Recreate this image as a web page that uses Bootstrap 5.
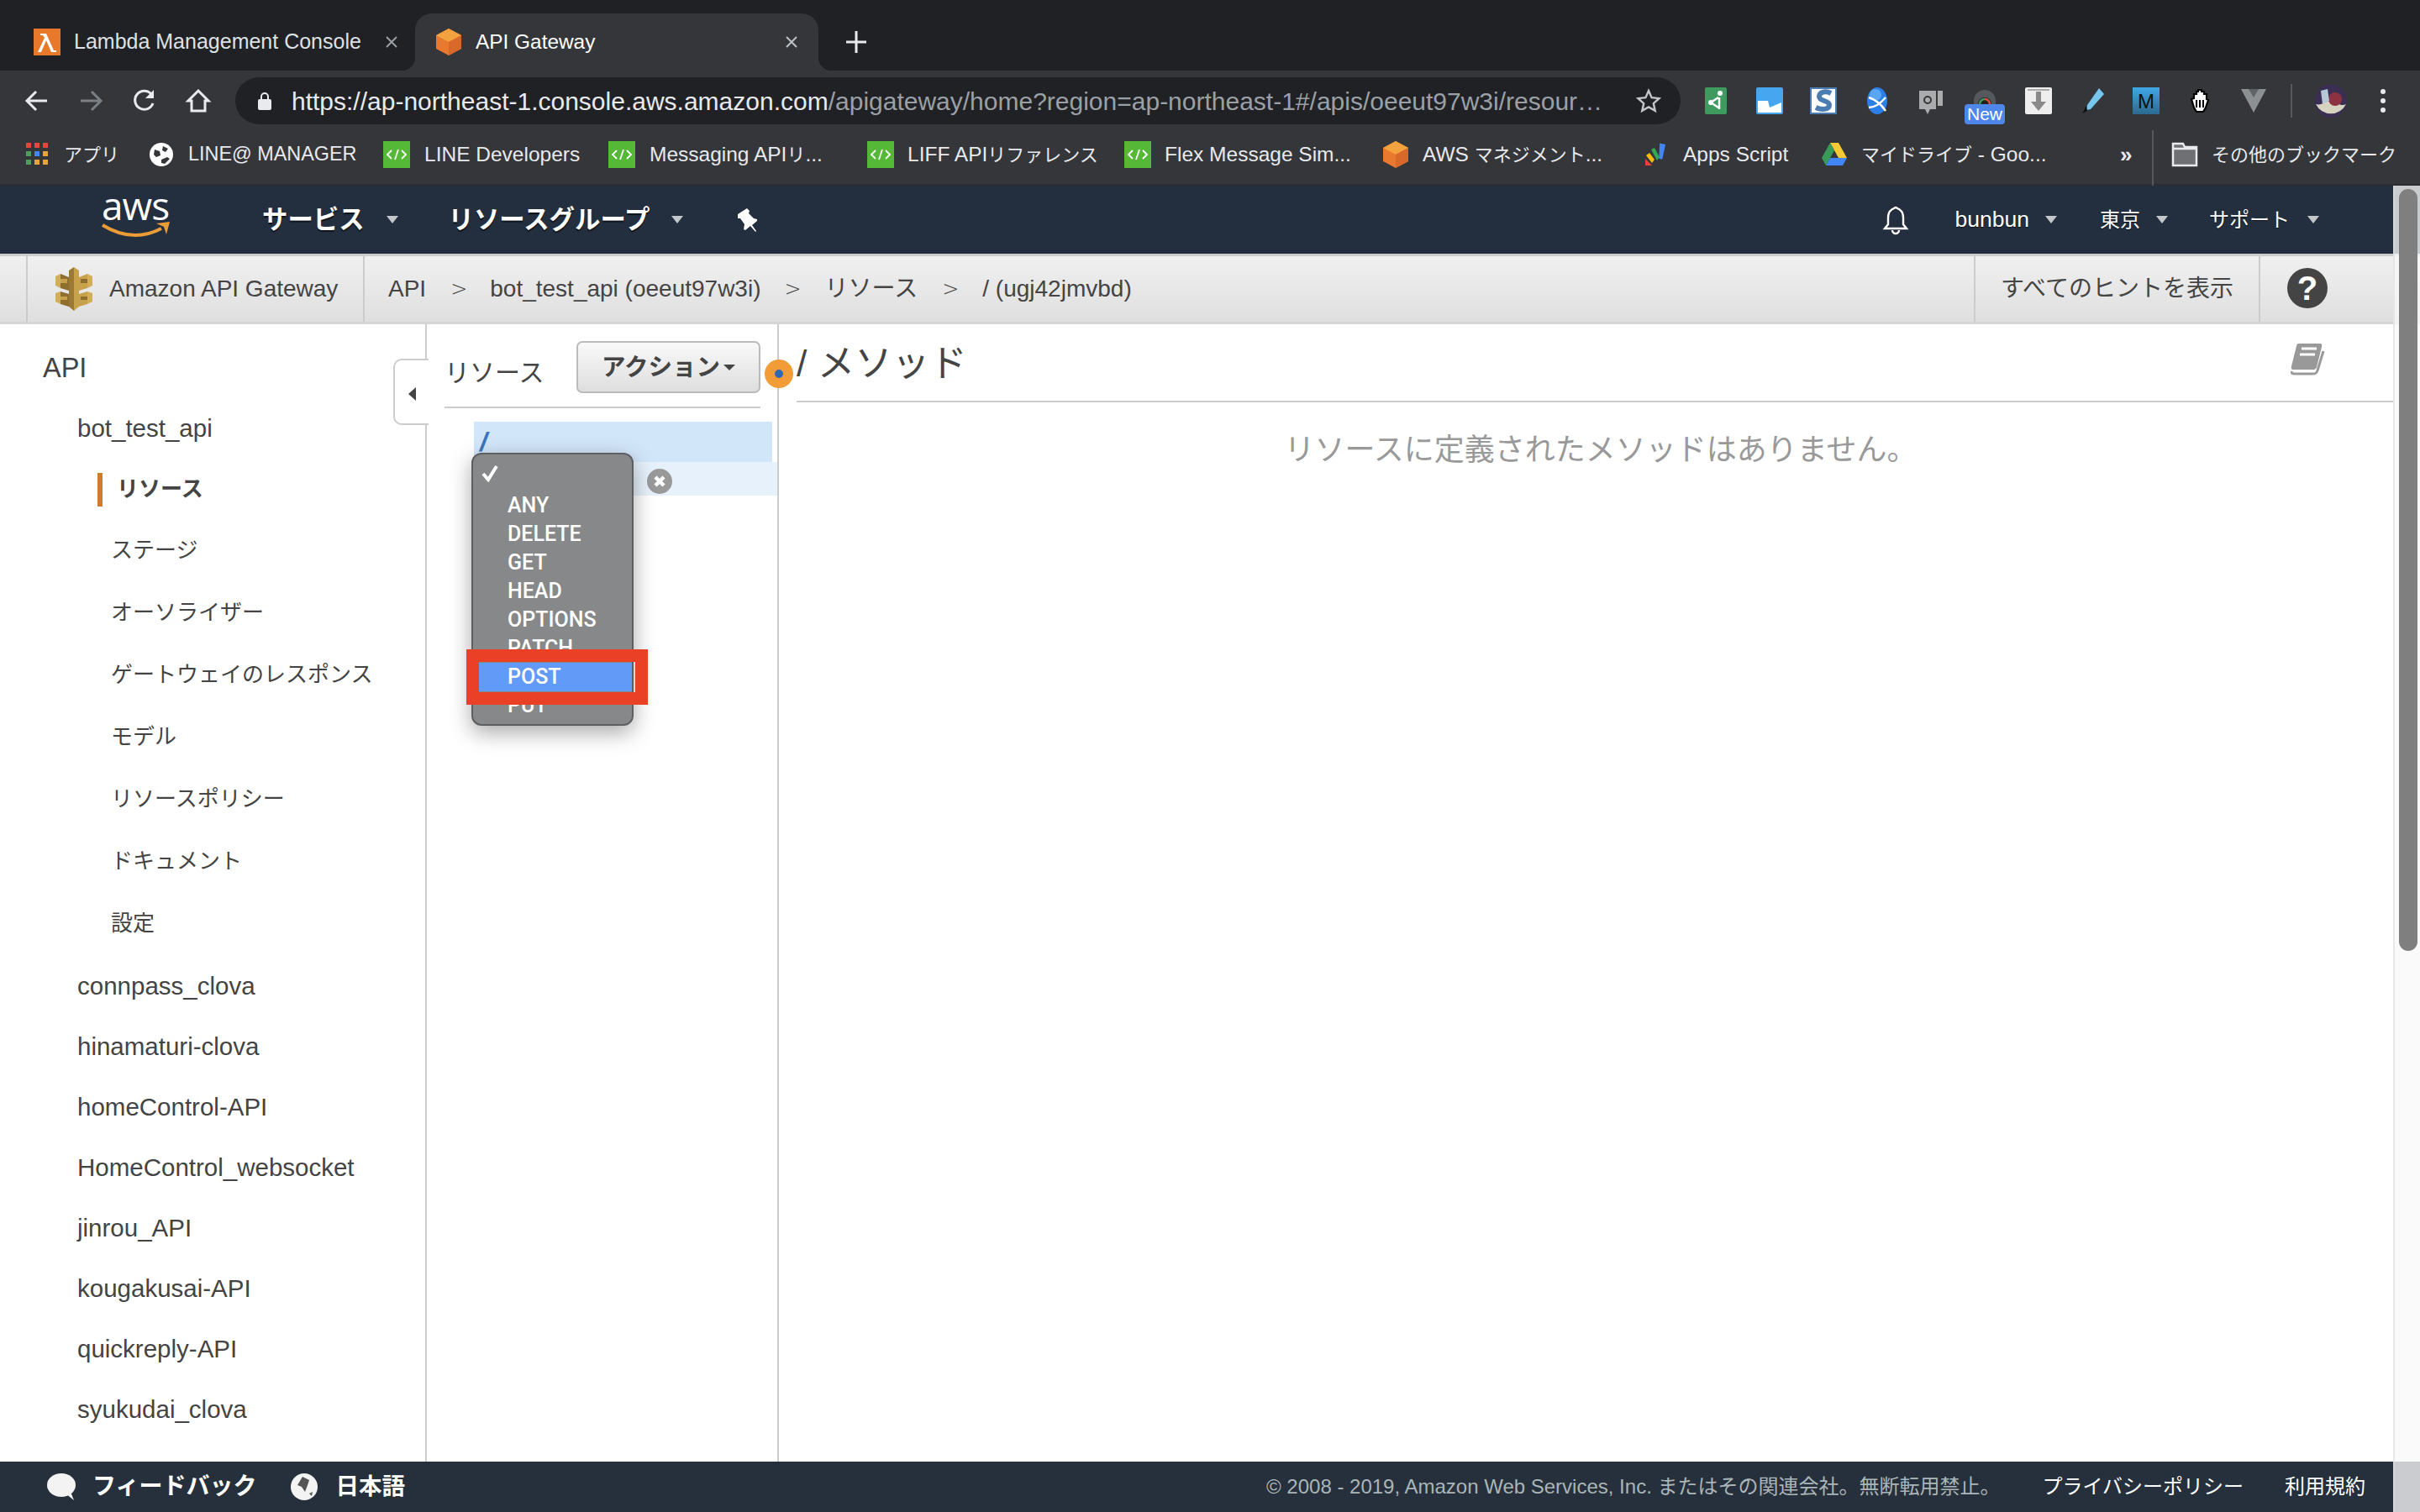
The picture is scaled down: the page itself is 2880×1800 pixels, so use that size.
<!DOCTYPE html>
<html lang="ja">
<head>
<meta charset="utf-8">
<title>API Gateway</title>
<link href="https://cdn.jsdelivr.net/npm/bootstrap@5.3.0/dist/css/bootstrap.min.css" rel="stylesheet">
<style>
html,body{margin:0;width:2880px;height:1800px;overflow:hidden;background:#fff}
body{font-family:"Liberation Sans","Noto Sans CJK JP",sans-serif;color:#444;display:flex;flex-direction:column}
svg{display:block;flex:none}
/* browser chrome */
.tabstrip{height:84px;background:#202124;padding-left:0;flex:none}
.tabx{height:68px;margin-top:16px;color:#dee1e5;font-size:25px;position:relative}
.tabx-a{width:494px;padding:0 20px 0 40px}
.tabx-b{width:480px;padding:0 24px;background:#35363a;border-radius:20px 20px 0 0;color:#fff;font-size:24.4px}
.tabx-b::before,.tabx-b::after{content:"";position:absolute;bottom:0;width:16px;height:16px}
.tabx-b::before{left:-16px;background:radial-gradient(circle at 0 0,transparent 16px,#35363a 16.5px)}
.tabx-b::after{right:-16px;background:radial-gradient(circle at 100% 0,transparent 16px,#35363a 16.5px)}
.tabname{margin-left:16px;flex:1;white-space:nowrap}
.plusmark{margin-left:32px;margin-top:16px}
.toolbar{height:72px;background:#35363a;flex:none;padding:8px 0 8px 28px}
.tool-nav{width:32px;margin-right:32px}
.urlpill{width:1720px;height:56px;margin-left:-4px;background:#202124;border-radius:28px;padding:0 23px 0 26px;flex:none;color:#9aa0a6;font-size:30px;white-space:nowrap}
.urlhost{color:#e8eaed}
.urltext{margin-left:23px;flex:1;overflow:hidden}
.exts{margin-left:26px;gap:32px;position:relative}
.exts-end{margin-left:28px;gap:26px}
.sepbar{width:2px;height:40px;background:#55585c}
.newtag{position:absolute;left:312px;top:20px;width:48px;height:24px;background:#4f86ea;color:#fff;font-size:21px;line-height:24px;text-align:center;border-radius:4px}
.bookmarks{height:65px;background:#35363a;flex:none;padding:0 0 7px 31px;color:#e8eaed;font-size:24.5px;white-space:nowrap;border-bottom:2px solid #2b2c30}
.cj{font-size:22px}
.capsname{font-size:23.4px}
.bmk{gap:17px;flex:none}
.bmk:nth-child(1){width:147px;gap:19px}
.bmk:nth-child(2){width:278px;gap:18px}
.bmk:nth-child(3){width:268px;gap:17px}
.bmk:nth-child(4){width:308px;gap:17px}
.bmk:nth-child(5){width:306px;gap:16px}
.bmk:nth-child(6){width:307px;gap:16px}
.bmk:nth-child(7){width:311px;gap:16px}
.bmk:nth-child(8){width:212px;gap:17px}
.bmk:nth-child(9){width:346px;gap:17px}
.morebm{width:30px;font-size:26px;font-weight:700;margin-right:8px;text-align:left}
.bmsep{width:2px;height:66px;background:#55585c;margin-right:21px;margin-top:7px}
.bmkend{padding-right:28px;gap:16px}
/* aws */
.appzone{flex:1;position:relative;display:flex;flex-direction:column;min-height:0}
.awsbar{height:81px;background:#232f3e;color:#fff;flex:none;padding:0 0 0 121px;white-space:nowrap}
.awslogo{width:80px;position:relative;height:60px;margin-right:111px}
.awsword{font-family:"Open Sans",sans-serif;font-size:46px;line-height:40px;display:block;letter-spacing:-1px;margin-top:-8px}
.awssmile{position:absolute;left:0;top:30px}
.topmenu{font-size:30.4px;font-weight:700;text-shadow:0 2px 1px rgba(0,0,0,.6)}
.caretv{width:0;height:0;border:7px solid transparent;border-top:9px solid #c4c7ca;border-bottom:0;display:inline-block}
.m1{margin-left:26px;margin-right:60px}
.m2{margin-left:26px;margin-right:64px}
.usernav{margin-left:auto;margin-right:120px;font-size:26.5px;text-shadow:0 1px 1px rgba(0,0,0,.6)}
.usr{margin-left:54px;margin-right:19px}
.loc{margin-left:51px;margin-right:19px;font-size:24px}
.sup{margin-left:49px;margin-right:21px;font-size:24px}
.crumbs{height:84px;background:linear-gradient(#f0f0f0,#dfdfdf);border-top:3px solid #ccc;border-bottom:3px solid #d5d5d5;flex:none;padding-left:31px;font-size:28px;color:#444;white-space:nowrap;box-sizing:border-box}
.crumb-brand{width:403px;height:100%;border-left:2px solid #ccc;border-right:2px solid #ccc;padding-left:33px;gap:20px;flex:none}
.crumb-path{padding-left:28px;gap:0}
.gt{font-family:"DejaVu Sans",sans-serif;font-weight:300;font-size:24px;color:#444}
.pc1{margin-right:29px}.pc2{margin:0 28px 0 27px}.pc3{margin:0 29px 0 28px}.pc4{margin:0 29px 0 28px}
.gtrail{margin-left:auto;height:100%;margin-right:190px;border-left:2px solid #ccc;border-right:2px solid #ccc;padding:0 30px;font-size:28px;flex:none;width:341px}
.helpdot{position:absolute;left:2722px;top:98px}
/* main */
.mainrow{flex:1;min-height:0}
.sidebarx{width:508px;border-right:2px solid #ccc;flex:none;padding-top:16px;font-size:29.5px;color:#444;position:relative}
.apihead{height:72px;padding-left:51px;font-size:32.5px}
.lv2{height:72px;padding-left:92px}
.lv3{height:74px;padding-left:132px;font-size:26px}
.lv3t{height:72px;margin-bottom:1px}
.lvend{margin-bottom:2px}
.act{font-weight:700;position:relative;padding-left:139px}
.act::before{content:"";position:absolute;left:116px;top:17px;width:6px;height:40px;background:#d07c2e}
.collapse-tab{position:absolute;left:468px;top:41px;width:42px;height:79px;background:#fff;border:2px solid #ccc;border-right:0;border-radius:10px 0 0 10px}
.collapse-arrow{position:absolute;left:16px;top:32px;width:0;height:0;border:8px solid transparent;border-right:9px solid #444;border-left:0}
.respanel{width:419px;border-right:2px solid #ccc;flex:none;position:relative}
.reshead{margin:20px 20px 0 21px;padding-bottom:16px;border-bottom:2px solid #ccc;height:80px}
.restitle{font-size:30px;margin-top:18px;flex:1;line-height:40px}
.actionbtn{width:219px;height:62px;background:linear-gradient(#f9f9f9,#dedede);border:2px solid #bbb;border-radius:7px;color:#444;font-weight:700;font-size:28.5px;padding:0;display:flex;align-items:center;justify-content:center;gap:4px}
.caretd{width:0;height:0;border:7px solid transparent;border-top:7px solid #444;border-bottom:0;display:inline-block}
.rowroot{height:48px;margin:16px 6px 0 56px;background:#d2e6fa;color:#3a74bd;font-size:32px;font-style:italic;font-weight:700;padding-left:7px;line-height:48px}
.rowchild{height:40px;margin-left:56px;background:#e6f1fb;position:relative}
.rmdot{position:absolute;left:206px;top:8px}
.methodlist{position:absolute;left:53px;top:153px;width:193px;height:325px;background:#878889;border:2px solid #5e5f61;border-radius:12px;box-shadow:0 8px 26px rgba(0,0,0,.35);color:#fff;font-family:Roboto,"Liberation Sans",sans-serif;font-weight:500;font-size:25px;padding:0;margin:0;overflow:hidden;min-width:0;display:block}
.mcheck{position:absolute;left:10px;top:11px}
.mitems{margin:44px 0 0;padding:0;list-style:none}
.mitems li{height:34px;line-height:34px;padding-left:41px}
.mpost{background:#619bf7}
.redbox{position:absolute;left:47px;top:387px;width:216px;height:66px;border:15px solid #ea4025;pointer-events:none;z-index:1100}
.dotmark{position:absolute;left:402px;top:42px;width:34px;height:34px;background:#f29c38;border-radius:50%;z-index:3}
.dotmark::after{content:"";position:absolute;left:12px;top:12px;width:10px;height:10px;background:#2f67b8;border-radius:50%}
.methods{flex:1;padding:0 32px 0 21px;position:relative}
.methhead{height:93px;border-bottom:2px solid #ccc;font-size:44.5px;color:#444;line-height:94px}
.bookic{position:absolute;right:112px;top:23px}
.emptymsg{color:#999;font-size:36px;text-align:center;margin-top:35px;line-height:44px;padding-left:14px}
/* footer */
.footerx{height:60px;background:#26303c;color:#fff;flex:none;font-size:28px;white-space:nowrap;padding-left:56px}
.fb{font-weight:700;margin-left:20px}
.fl{font-weight:700;margin-left:21px;font-size:27.5px}
.globe{margin-left:41px}
.fright{margin-left:auto;margin-right:65px;font-size:24px}
.copyx{color:#aab5b8}
.fp1{margin-left:50px}
.fp2{margin-left:49px}
.scrolltrack{position:absolute;right:0;top:0;bottom:0;width:32px;background:rgba(248,248,248,.78);border-left:2px solid rgba(220,220,220,.6);z-index:1200}
.scrollthumb{position:absolute;left:5px;top:4px;width:22px;height:907px;background:#7f7f7f;border-radius:11px}
</style>
</head>
<body>
<div class="tabstrip d-flex">
  <div class="tabx tabx-a d-flex align-items-center">
    <svg width="32" height="32" viewBox="0 0 32 32"><rect width="32" height="32" fill="#e8792b"/><path d="M8 6h7l9 20h3v2h-6L15 14 9 28H5l8-17-2-3H8z" fill="#fff"/></svg>
    <span class="tabname">Lambda Management Console</span>
    <svg width="16" height="16" viewBox="0 0 16 16"><path d="M2 2l12 12M14 2L2 14" stroke="#9aa0a6" stroke-width="2"/></svg>
  </div>
  <div class="tabx tabx-b d-flex align-items-center">
    <svg width="32" height="32" viewBox="0 0 32 32"><path d="M16 0l15 8v16l-15 8-15-8V8z" fill="#e8792f"/><path d="M16 0l15 8-15 8L1 8z" fill="#f3a23f"/><path d="M16 16l15-8v16l-15 8z" fill="#d9692a"/></svg>
    <span class="tabname">API Gateway</span>
    <svg width="16" height="16" viewBox="0 0 16 16"><path d="M2 2l12 12M14 2L2 14" stroke="#bdc1c6" stroke-width="2"/></svg>
  </div>
  <svg class="plusmark" width="26" height="68" viewBox="0 0 26 68"><path d="M13 21v26M1 34h24" stroke="#e8eaed" stroke-width="3"/></svg>
</div>

<div class="toolbar d-flex align-items-center">
  <svg class="tool-nav" width="32" height="32" viewBox="0 0 32 32"><path d="M28 16H5M15 5L4 16l11 11" fill="none" stroke="#e8eaed" stroke-width="3"/></svg>
  <svg class="tool-nav" width="32" height="32" viewBox="0 0 32 32"><path d="M4 16h23M17 5l11 11-11 11" fill="none" stroke="#7b7e82" stroke-width="3"/></svg>
  <svg class="tool-nav" width="32" height="32" viewBox="0 0 32 32"><path d="M26 19a11 11 0 1 1-2-11" fill="none" stroke="#e8eaed" stroke-width="3"/><path d="M27 3v10H17z" fill="#e8eaed"/></svg>
  <svg class="tool-nav" width="32" height="32" viewBox="0 0 32 32"><path d="M16 4L4 16h4v12h16V16h4z" fill="none" stroke="#e8eaed" stroke-width="3"/></svg>
  <div class="urlpill d-flex align-items-center">
    <svg width="18" height="24" viewBox="0 0 18 24"><path d="M5 10V7a4 4 0 0 1 8 0v3" fill="none" stroke="#e8eaed" stroke-width="2"/><rect x="1" y="10" width="16" height="13" rx="2" fill="#e8eaed"/></svg>
    <span class="urltext"><span class="urlhost">https://ap-northeast-1.console.aws.amazon.com</span>/apigateway/home?region=ap-northeast-1#/apis/oeeut97w3i/resour…</span>
    <svg width="30" height="30" viewBox="0 0 30 30"><path d="M15 3l3.6 8.2 8.9.9-6.7 6 1.900 8.800L15 22.400l-7.700 4.500 1.900-8.800-6.700-6 8.900-.9z" fill="none" stroke="#c4c7ca" stroke-width="2.400"/></svg>
  </div>
  <div class="exts d-flex align-items-center">
    <svg width="32" height="32" viewBox="0 0 32 32"><rect x="3" width="26" height="32" rx="2" fill="#3e9a5e"/><circle cx="21" cy="7" r="3" fill="#fff"/><path d="M20 12v14M10 18l9-6M10 18l9 6" stroke="#fff" stroke-width="2.500"/><circle cx="10" cy="18" r="3" fill="#fff"/></svg>
    <svg width="32" height="32" viewBox="0 0 32 32"><rect width="32" height="32" rx="2" fill="#46a6ef"/><path d="M2 16h12l2 8 14-6v12H2z" fill="#fff"/></svg>
    <svg width="32" height="32" viewBox="0 0 32 32"><rect width="32" height="32" fill="#fff"/><rect x="1" y="1" width="30" height="30" fill="none" stroke="#4b7db3" stroke-width="2"/><path d="M25 7c-6-3-14-2-14 4 0 6 12 4 12 10 0 6-10 6-16 3" fill="none" stroke="#4b7db3" stroke-width="6"/></svg>
    <svg width="32" height="32" viewBox="0 0 32 32"><ellipse cx="16" cy="16" rx="12" ry="16" fill="#2c7fe8"/><ellipse cx="14" cy="9" rx="7" ry="7" fill="#5aa6f2"/><path d="M6 12q12 4 20 16M26 12Q16 24 6 24" stroke="#fff" stroke-width="2.400" fill="none"/></svg>
    <svg width="32" height="32" viewBox="0 0 32 32"><path d="M2 4h20v22h-7l-3 6-3-6H2z" fill="#a9abad"/><path d="M24 4h6v18h-6z" fill="#a9abad"/><circle cx="12" cy="15" r="4" fill="none" stroke="#35363a" stroke-width="2"/></svg>
    <svg width="32" height="32" viewBox="0 0 32 32"><path d="M3 16a13 13 0 0 1 26 0v4H3z" fill="#55585c"/><path d="M8 20a8 8 0 0 1 16 0z" fill="#222"/><path d="M10 20a6 6 0 0 1 6-6" stroke="#3e9a5e" stroke-width="2.500" fill="none"/><path d="M16 14a6 6 0 0 1 6 6" stroke="#e0503c" stroke-width="2.500" fill="none"/></svg>
    <svg width="32" height="32" viewBox="0 0 32 32"><rect width="32" height="32" rx="2" fill="#eee"/><path d="M13 5h6v12h6l-9 11-9-11h6z" fill="#8a8a8a"/><path d="M3 3h26" stroke="#aaa" stroke-width="2"/></svg>
    <svg width="32" height="32" viewBox="0 0 32 32"><path d="M24 1l6 7-16 18-5 1 1-6z" fill="#77c6ee"/><path d="M9 22l-5 9 6-3z" fill="#111"/></svg>
    <svg width="32" height="32" viewBox="0 0 32 32"><defs><linearGradient id="mg" x1="0" y1="0" x2="0" y2="1"><stop offset="0" stop-color="#3fa7e6"/><stop offset="1" stop-color="#2b6a90"/></linearGradient></defs><rect width="32" height="32" fill="url(#mg)"/><text x="16" y="25" text-anchor="middle" font-family="Liberation Sans" font-size="24" fill="#111">M</text></svg>
    <svg width="32" height="32" viewBox="0 0 32 32"><path d="M6 14l3-1V8h3V5h2V3h4v2h3v3h3v6l2 1-3 9-3 5H12l-3-5z" fill="#fff" stroke="#000" stroke-width="2.200"/><path d="M12 15v9M16 15v9M20 15v9" stroke="#000" stroke-width="2"/></svg>
    <svg width="32" height="32" viewBox="0 0 32 32"><path d="M1 2h30L16 30z" fill="#8d9093"/><path d="M10 2h12l-6 10z" fill="#5f6266"/></svg>
    <span class="newtag">New</span>
  </div>
  <div class="exts-end d-flex align-items-center">
    <span class="sepbar"></span>
    <svg width="40" height="40" viewBox="0 0 40 40"><ellipse cx="20" cy="20" rx="19" ry="20" fill="#3a2f52"/><path d="M2 24a20 20 0 0 0 36 0c-8 4-10-4-18-4s-10 6-18 4z" fill="#d6d3c0"/><circle cx="25" cy="18" r="8" fill="#8c3240"/><path d="M8 8l8-2 2 14-8 4z" fill="#b6c8d8"/></svg>
    <svg width="32" height="32" viewBox="0 0 32 32"><circle cx="16" cy="5" r="3" fill="#e8eaed"/><circle cx="16" cy="16" r="3" fill="#e8eaed"/><circle cx="16" cy="27" r="3" fill="#e8eaed"/></svg>
  </div>
</div>

<div class="bookmarks d-flex align-items-center">
  <div class="bmk d-flex align-items-center">
    <svg width="26" height="28" viewBox="0 0 26 28"><g fill="#e8453c"><rect width="6" height="6"/><rect x="10" width="6" height="6"/><rect x="20" width="6" height="6"/></g><rect y="10" width="6" height="6" fill="#4ca05c"/><rect x="10" y="10" width="6" height="6" fill="#4285f4"/><rect x="20" y="10" width="6" height="6" fill="#e8a33a"/><rect y="20" width="6" height="6" fill="#4ca05c"/><rect x="10" y="20" width="6" height="6" fill="#e8a33a"/><rect x="20" y="20" width="6" height="6" fill="#e8a33a"/></svg>
    <span class="cj">アプリ</span>
  </div>
  <div class="bmk d-flex align-items-center">
    <svg width="28" height="28" viewBox="0 0 28 28"><circle cx="14" cy="14" r="14" fill="#fff"/><path d="M6 8l6 2 1 5-5 2-3-3zM16 4l6 3-3 4-4-2zM14 20l7-3 3 2-6 6-4-1z" fill="#35363a"/></svg>
    <span class="capsname">LINE@ MANAGER</span>
  </div>
  <div class="bmk d-flex align-items-center">
    <svg width="32" height="32" viewBox="0 0 32 32"><rect width="32" height="32" fill="#55b937"/><path d="M10 11l-5 5 5 5M22 11l5 5-5 5M18 10l-4 12" fill="none" stroke="#fff" stroke-width="1.800"/></svg>
    <span>LINE Developers</span>
  </div>
  <div class="bmk d-flex align-items-center">
    <svg width="32" height="32" viewBox="0 0 32 32"><rect width="32" height="32" fill="#55b937"/><path d="M10 11l-5 5 5 5M22 11l5 5-5 5M18 10l-4 12" fill="none" stroke="#fff" stroke-width="1.800"/></svg>
    <span>Messaging API<span class="cj">リ</span>...</span>
  </div>
  <div class="bmk d-flex align-items-center">
    <svg width="32" height="32" viewBox="0 0 32 32"><rect width="32" height="32" fill="#55b937"/><path d="M10 11l-5 5 5 5M22 11l5 5-5 5M18 10l-4 12" fill="none" stroke="#fff" stroke-width="1.800"/></svg>
    <span>LIFF API<span class="cj">リファレンス</span></span>
  </div>
  <div class="bmk d-flex align-items-center">
    <svg width="32" height="32" viewBox="0 0 32 32"><rect width="32" height="32" fill="#55b937"/><path d="M10 11l-5 5 5 5M22 11l5 5-5 5M18 10l-4 12" fill="none" stroke="#fff" stroke-width="1.800"/></svg>
    <span>Flex Message Sim...</span>
  </div>
  <div class="bmk d-flex align-items-center">
    <svg width="32" height="32" viewBox="0 0 32 32"><path d="M16 0l15 8v16l-15 8-15-8V8z" fill="#e8792f"/><path d="M16 0l15 8-15 8L1 8z" fill="#f3a23f"/><path d="M16 16l15-8v16l-15 8z" fill="#d9692a"/></svg>
    <span>AWS <span class="cj">マネジメント</span>...</span>
  </div>
  <div class="bmk d-flex align-items-center">
    <svg width="30" height="30" viewBox="0 0 30 30"><path d="M2 20l8 8H2z" fill="#ea4335"/><path d="M3 16l7 9 3-4-6-8z" fill="#fbbc05"/><path d="M9 9l7 13 3-4-6-11z" fill="#34a853"/><path d="M17 2l3 18 4 0 0-18z" fill="#4285f4" transform="rotate(12 20 12)"/></svg>
    <span>Apps Script</span>
  </div>
  <div class="bmk d-flex align-items-center">
    <svg width="30" height="28" viewBox="0 0 30 28"><path d="M10 0h10l10 18H20z" fill="#f7c935"/><path d="M10 0L0 18l5 9L15 9z" fill="#3a9b58"/><path d="M5 27h20l5-9H10z" fill="#4285f4"/></svg>
    <span><span class="cj">マイドライブ</span> - Goo...</span>
  </div>
  <div class="ms-auto d-flex align-items-center">
    <span class="morebm">»</span>
    <span class="bmsep"></span>
    <div class="bmkend d-flex align-items-center">
      <svg width="32" height="30" viewBox="0 0 32 30"><path d="M2 2h12l2 4h14v22H2z" fill="#6e7074" stroke="#e8eaed" stroke-width="2.500"/><path d="M2 8h28" stroke="#e8eaed" stroke-width="2.500"/></svg>
      <span class="cj">その他のブックマーク</span>
    </div>
  </div>
</div>

<div class="appzone">
  <nav class="awsbar d-flex align-items-center">
    <div class="awslogo">
      <span class="awsword">aws</span>
      <svg class="awssmile" width="82" height="22" viewBox="0 0 82 22"><path d="M1 6q36 22 70 4" fill="none" stroke="#ec9c36" stroke-width="4"/><path d="M65 4l16-2-4 15-3-9z" fill="#ec9c36"/></svg>
    </div>
    <span class="topmenu">サービス</span><i class="caretv m1"></i>
    <span class="topmenu">リソースグループ</span><i class="caretv m2"></i>
    <svg width="26" height="30" viewBox="0 0 26 30"><path d="M1 8L12 1l3 3-1 3 6 6 4 1v2l-6 5 5 7-1 1-6-7-6 5-2-1 1-6-5-7-3 0z" fill="#fff"/></svg>
    <div class="usernav d-flex align-items-center">
      <svg width="34" height="36" viewBox="0 0 34 36"><path d="M17 3a3 3 0 0 1 2 1c5 2 7 6 7 11v8l4 5H4l4-5v-8c0-5 2-9 7-11a3 3 0 0 1 2-1z" fill="none" stroke="#fff" stroke-width="2.400"/><path d="M13 30a4 4 0 0 0 8 0" fill="none" stroke="#fff" stroke-width="2.400"/></svg>
      <span class="usr">bunbun</span><i class="caretv"></i>
      <span class="loc">東京</span><i class="caretv"></i>
      <span class="sup">サポート</span><i class="caretv"></i>
    </div>
  </nav>

  <div class="crumbs d-flex align-items-center">
    <div class="crumb-brand d-flex align-items-center">
      <svg width="44" height="52" viewBox="0 0 44 52"><path d="M6 8L16 12V28L6 25z" fill="#8f6f2e"/><path d="M0 11l6-3V25l-6-3z" fill="#d3ae58"/><path d="M6 14h8v5H6z" fill="#c8a14c"/><path d="M28 12L38 8V25L28 28z" fill="#c8a14c"/><path d="M38 8l6 3V22l-6 3z" fill="#d3ae58"/><path d="M30 14h8v5h-8z" fill="#8f6f2e"/><path d="M6 29L16 32V47L6 44z" fill="#8f6f2e"/><path d="M0 31l6-2V44l-6-3z" fill="#d3ae58"/><path d="M6 35h8v4H6z" fill="#c8a14c"/><path d="M28 32L38 29V44L28 47z" fill="#c8a14c"/><path d="M38 29l6 2V41l-6 3z" fill="#d3ae58"/><path d="M30 35h8v4h-8z" fill="#8f6f2e"/><path d="M16 4l6-4V52l-6-5z" fill="#9a7a35"/><path d="M22 0l6 4V47l-6 5z" fill="#c8a14c"/></svg>
      <span>Amazon API Gateway</span>
    </div>
    <div class="crumb-path d-flex align-items-center">
      <span class="pc1">API</span><span class="gt">&gt;</span><span class="pc2">bot_test_api (oeeut97w3i)</span><span class="gt">&gt;</span><span class="pc3">リソース</span><span class="gt">&gt;</span><span class="pc4">/ (ugj42jmvbd)</span>
    </div>
    <div class="gtrail d-flex align-items-center"><span>すべてのヒントを表示</span></div>
    <svg class="helpdot" width="48" height="48" viewBox="0 0 48 48"><circle cx="24" cy="24" r="24" fill="#444"/><text x="24" y="38" text-anchor="middle" font-family="Liberation Sans" font-weight="700" font-size="40" fill="#fff">?</text></svg>
  </div>

  <div class="mainrow d-flex">
    <aside class="sidebarx">
      <div class="apihead d-flex align-items-center">API</div>
      <div class="lv2 d-flex align-items-center">bot_test_api</div>
      <div class="lv3 lv3t act d-flex align-items-center">リソース</div>
      <div class="lv3 lv3t d-flex align-items-center">ステージ</div>
      <div class="lv3 d-flex align-items-center">オーソライザー</div>
      <div class="lv3 d-flex align-items-center">ゲートウェイのレスポンス</div>
      <div class="lv3 d-flex align-items-center">モデル</div>
      <div class="lv3 d-flex align-items-center">リソースポリシー</div>
      <div class="lv3 d-flex align-items-center">ドキュメント</div>
      <div class="lv3 lvend d-flex align-items-center">設定</div>
      <div class="lv2 d-flex align-items-center">connpass_clova</div>
      <div class="lv2 d-flex align-items-center">hinamaturi-clova</div>
      <div class="lv2 d-flex align-items-center">homeControl-API</div>
      <div class="lv2 d-flex align-items-center">HomeControl_websocket</div>
      <div class="lv2 d-flex align-items-center">jinrou_API</div>
      <div class="lv2 d-flex align-items-center">kougakusai-API</div>
      <div class="lv2 d-flex align-items-center">quickreply-API</div>
      <div class="lv2 d-flex align-items-center">syukudai_clova</div>
      <div class="collapse-tab"><i class="collapse-arrow"></i></div>
    </aside>
    <section class="respanel">
      <div class="reshead d-flex">
        <span class="restitle">リソース</span>
        <button type="button" class="actionbtn"><span>アクション</span><i class="caretd"></i></button>
      </div>
      <div class="rowroot">/</div>
      <div class="rowchild">
        <svg class="rmdot" width="30" height="30" viewBox="0 0 30 30"><circle cx="15" cy="15" r="15" fill="#999"/><path d="M10 10l10 10M20 10L10 20" stroke="#fff" stroke-width="4.500"/></svg>
      </div>
      <div class="methodlist dropdown-menu show">
        <svg class="mcheck" width="20" height="22" viewBox="0 0 20 22"><path d="M2 12l6 7L18 3" fill="none" stroke="#fff" stroke-width="4"/></svg>
        <ul class="mitems">
          <li>ANY</li><li>DELETE</li><li>GET</li><li>HEAD</li><li>OPTIONS</li><li>PATCH</li><li class="mpost">POST</li><li>PUT</li>
        </ul>
      </div>
      <div class="redbox"></div>
      <div class="dotmark"></div>
    </section>
    <section class="methods">
      <div class="methhead">/ メソッド</div>
      <svg class="bookic" width="42" height="38" viewBox="0 0 42 38"><path d="M9 0h26q3 0 2 4l-6 24q-1 3-4 3H3q-3 0-2-4L7 3q.5-3 2-3z" fill="#999"/><path d="M13 6h18M11 13h18" stroke="#fff" stroke-width="3"/><path d="M39 9l-7 23q-1 4-5 4H4q-3 0-3-3" fill="none" stroke="#999" stroke-width="3"/></svg>
      <p class="emptymsg">リソースに定義されたメソッドはありません。</p>
    </section>
  </div>

  <footer class="footerx d-flex align-items-center">
    <svg width="34" height="32" viewBox="0 0 34 32"><ellipse cx="17" cy="14" rx="17" ry="14" fill="#f3f3f3"/><path d="M22 24l10 8-4-10z" fill="#f3f3f3"/></svg>
    <span class="fb">フィードバック</span>
    <svg class="globe" width="32" height="32" viewBox="0 0 32 32"><circle cx="16" cy="16" r="16" fill="#f3f3f3"/><path d="M14 4l8 4-2 6-3 8-4-6-5-2zM22 24l4-2-1 5z" fill="#555"/></svg>
    <span class="fl">日本語</span>
    <div class="fright d-flex align-items-center">
      <span class="copyx">© 2008 - 2019, Amazon Web Services, Inc. またはその関連会社。無断転用禁止。</span>
      <span class="fp1">プライバシーポリシー</span>
      <span class="fp2">利用規約</span>
    </div>
  </footer>

  <div class="scrolltrack"><div class="scrollthumb"></div></div>
</div>
<script src="https://cdn.jsdelivr.net/npm/bootstrap@5.3.0/dist/js/bootstrap.bundle.min.js"></script>
</body>
</html>
